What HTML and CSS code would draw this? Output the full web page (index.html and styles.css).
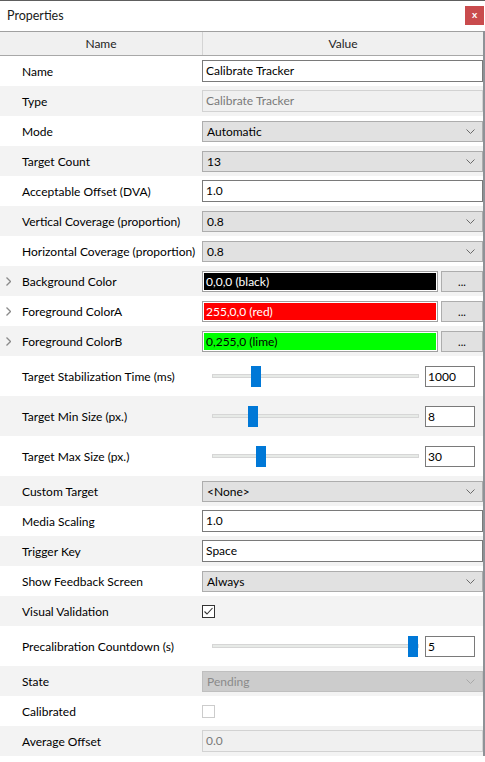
FILE: index.html
```html
<!DOCTYPE html>
<html>
<head>
<meta charset="utf-8">
<link rel="stylesheet" href="styles.css">
</head>
<body>
<div class="topline"></div>
<div class="titlebar">
  <span class="title">Properties</span>
  <span class="close">x</span>
</div>
<div class="grid">
  <div class="head"><div class="hc">Name</div><div class="hc hv">Value</div></div>

  <div class="row"><div class="lbl">Name</div><div class="val"><div class="tb">Calibrate Tracker</div></div></div>
  <div class="row alt"><div class="lbl">Type</div><div class="val"><div class="tb dis">Calibrate Tracker</div></div></div>
  <div class="row"><div class="lbl">Mode</div><div class="val"><div class="dd"><span>Automatic</span><svg class="chev" width="9" height="5" viewBox="0 0 9 5"><polyline points="0.5,0.5 4.5,4.5 8.5,0.5" fill="none" stroke="#6a6a6a" stroke-width="1"/></svg></div></div></div>
  <div class="row alt"><div class="lbl">Target Count</div><div class="val"><div class="dd"><span>13</span><svg class="chev" width="9" height="5" viewBox="0 0 9 5"><polyline points="0.5,0.5 4.5,4.5 8.5,0.5" fill="none" stroke="#6a6a6a" stroke-width="1"/></svg></div></div></div>
  <div class="row"><div class="lbl">Acceptable Offset (DVA)</div><div class="val"><div class="tb">1.0</div></div></div>
  <div class="row alt"><div class="lbl">Vertical Coverage (proportion)</div><div class="val"><div class="dd"><span>0.8</span><svg class="chev" width="9" height="5" viewBox="0 0 9 5"><polyline points="0.5,0.5 4.5,4.5 8.5,0.5" fill="none" stroke="#6a6a6a" stroke-width="1"/></svg></div></div></div>
  <div class="row"><div class="lbl">Horizontal Coverage (proportion)</div><div class="val"><div class="dd"><span>0.8</span><svg class="chev" width="9" height="5" viewBox="0 0 9 5"><polyline points="0.5,0.5 4.5,4.5 8.5,0.5" fill="none" stroke="#6a6a6a" stroke-width="1"/></svg></div></div></div>

  <div class="row alt"><div class="lbl"><svg class="exp" width="5" height="9" viewBox="0 0 5 9"><polyline points="0.5,0.5 4.5,4.5 0.5,8.5" fill="none" stroke="#8a8a8a" stroke-width="1.3"/></svg>Background Color</div><div class="val"><div class="cbox"><div class="cin black">0,0,0 (black)</div></div><div class="btn">...</div></div></div>
  <div class="row"><div class="lbl"><svg class="exp" width="5" height="9" viewBox="0 0 5 9"><polyline points="0.5,0.5 4.5,4.5 0.5,8.5" fill="none" stroke="#8a8a8a" stroke-width="1.3"/></svg>Foreground ColorA</div><div class="val"><div class="cbox"><div class="cin red">255,0,0 (red)</div></div><div class="btn">...</div></div></div>
  <div class="row alt"><div class="lbl"><svg class="exp" width="5" height="9" viewBox="0 0 5 9"><polyline points="0.5,0.5 4.5,4.5 0.5,8.5" fill="none" stroke="#8a8a8a" stroke-width="1.3"/></svg>Foreground ColorB</div><div class="val"><div class="cbox"><div class="cin lime">0,255,0 (lime)</div></div><div class="btn">...</div></div></div>

  <div class="row tall"><div class="lbl">Target Stabilization Time (ms)</div><div class="val"><div class="slider"><div class="track"></div><div class="thumb" style="left:39px"></div></div><div class="num">1000</div></div></div>
  <div class="row tall alt"><div class="lbl">Target Min Size (px.)</div><div class="val"><div class="slider"><div class="track"></div><div class="thumb" style="left:36px"></div></div><div class="num">8</div></div></div>
  <div class="row tall"><div class="lbl">Target Max Size (px.)</div><div class="val"><div class="slider"><div class="track"></div><div class="thumb" style="left:44px"></div></div><div class="num">30</div></div></div>

  <div class="row alt"><div class="lbl">Custom Target</div><div class="val"><div class="dd"><span>&lt;None&gt;</span><svg class="chev" width="9" height="5" viewBox="0 0 9 5"><polyline points="0.5,0.5 4.5,4.5 8.5,0.5" fill="none" stroke="#6a6a6a" stroke-width="1"/></svg></div></div></div>
  <div class="row"><div class="lbl">Media Scaling</div><div class="val"><div class="tb">1.0</div></div></div>
  <div class="row alt"><div class="lbl">Trigger Key</div><div class="val"><div class="tb">Space</div></div></div>
  <div class="row"><div class="lbl">Show Feedback Screen</div><div class="val"><div class="dd"><span>Always</span><svg class="chev" width="9" height="5" viewBox="0 0 9 5"><polyline points="0.5,0.5 4.5,4.5 8.5,0.5" fill="none" stroke="#6a6a6a" stroke-width="1"/></svg></div></div></div>
  <div class="row alt"><div class="lbl">Visual Validation</div><div class="val"><div class="chk"><svg width="11" height="11" viewBox="0 0 11 11"><polyline points="1.5,5.5 4,8 9.5,2" fill="none" stroke="#333" stroke-width="1.1"/></svg></div></div></div>
  <div class="row tall"><div class="lbl">Precalibration Countdown (s)</div><div class="val"><div class="slider"><div class="track"></div><div class="thumb" style="left:196px"></div></div><div class="num">5</div></div></div>
  <div class="row alt"><div class="lbl">State</div><div class="val"><div class="dd dis"><span>Pending</span><svg class="chev" width="9" height="5" viewBox="0 0 9 5"><polyline points="0.5,0.5 4.5,4.5 8.5,0.5" fill="none" stroke="#a8a8a8" stroke-width="1"/></svg></div></div></div>
  <div class="row"><div class="lbl">Calibrated</div><div class="val"><div class="chk dis"></div></div></div>
  <div class="row alt"><div class="lbl">Average Offset</div><div class="val"><div class="tb dis">0.0</div></div></div>
</div>
</body>
</html>
```

FILE: styles.css
```css
html, body {
  margin: 0;
  padding: 0;
  background: #ffffff;
}
body {
  font-family: Lato, "Liberation Sans", sans-serif;
  font-size: 12px;
  color: #000000;
  width: 485px;
  overflow: hidden;
}
.topline {
  height: 1px;
  background: #5e5e5e;
}
.titlebar {
  height: 30px;
  display: flex;
  align-items: center;
  justify-content: space-between;
  padding-left: 7px;
  padding-right: 1px;
  box-sizing: border-box;
}
.title {
  font-size: 12.5px;
  color: #1a1a1a;
  margin-top: -2px;
}
.close {
  width: 19px;
  height: 19px;
  background: #c94b4d;
  color: #ffffff;
  font-weight: bold;
  font-size: 10px;
  line-height: 17px;
  text-align: center;
  margin-top: -1px;
}
.grid {
  border-right: 2px solid #8e9297;
}
.head {
  display: grid;
  grid-template-columns: 202px 1fr;
  height: 25px;
  box-sizing: border-box;
  background: #f0f0f0;
  border-top: 1px solid #a0a0a0;
  border-bottom: 1px solid #a8a8a8;
}
.hc {
  display: flex;
  align-items: center;
  justify-content: center;
  color: #1e1e1e;
}
.hv {
  border-left: 1px solid #d4d4d4;
}
.row {
  display: grid;
  grid-template-columns: 202px 1fr;
  height: 30px;
  align-items: center;
}
.row.tall {
  height: 40px;
}
.row.alt {
  background: #f3f3f3;
}
.lbl {
  padding-left: 22px;
  display: flex;
  align-items: center;
  position: relative;
  white-space: nowrap;
}
.exp {
  position: absolute;
  left: 6px;
  top: 50%;
  margin-top: -4px;
}
.val {
  display: flex;
  align-items: center;
}
.tb {
  flex: 1;
  height: 22px;
  box-sizing: border-box;
  border: 1px solid #7a7a7a;
  background: #ffffff;
  padding: 0 3px;
  line-height: 20px;
}
.tb.dis {
  border-color: #d2d2d2;
  background: #f0f0f0;
  color: #7a7a7a;
}
.dd {
  flex: 1;
  height: 21px;
  box-sizing: border-box;
  border: 1px solid #adadad;
  background: #e1e1e1;
  padding: 0 7px 0 4px;
  display: flex;
  align-items: center;
  justify-content: space-between;
}
.dd.dis {
  background: #cccccc;
  border-color: #bfbfbf;
  color: #8a8a8a;
}
.cbox {
  width: 236px;
  height: 21px;
  box-sizing: border-box;
  border: 1px solid #a0a0a0;
  padding: 1px;
  background: #ffffff;
}
.cin {
  height: 100%;
  padding-left: 2px;
  line-height: 17px;
}
.cin.black { background: #000000; color: #ffffff; }
.cin.red { background: #ff0000; color: #ffffff; }
.cin.lime { background: #00ff00; color: #000000; }
.btn {
  flex: 1;
  margin-left: 3px;
  height: 21px;
  box-sizing: border-box;
  border: 1px solid #adadad;
  background: #e1e1e1;
  text-align: center;
  line-height: 19px;
  font-size: 11px;
}
.slider {
  position: relative;
  width: 207px;
  height: 21px;
  margin-left: 10px;
}
.track {
  position: absolute;
  left: 0;
  right: 0;
  top: 8px;
  height: 4px;
  box-sizing: border-box;
  background: #e7eae7;
  border: 1px solid #d6d6d6;
}
.thumb {
  position: absolute;
  top: 0;
  width: 10px;
  height: 21px;
  background: #0078d7;
}
.num {
  width: 50px;
  height: 21px;
  box-sizing: border-box;
  margin-left: 6px;
  border: 1px solid #7a7a7a;
  background: #ffffff;
  padding: 0 2px;
  line-height: 19px;
}
.chk {
  width: 13px;
  height: 13px;
  box-sizing: border-box;
  border: 1px solid #333333;
  background: #ffffff;
  display: flex;
  align-items: center;
  justify-content: center;
}
.chk.dis {
  border-color: #cccccc;
}
```
